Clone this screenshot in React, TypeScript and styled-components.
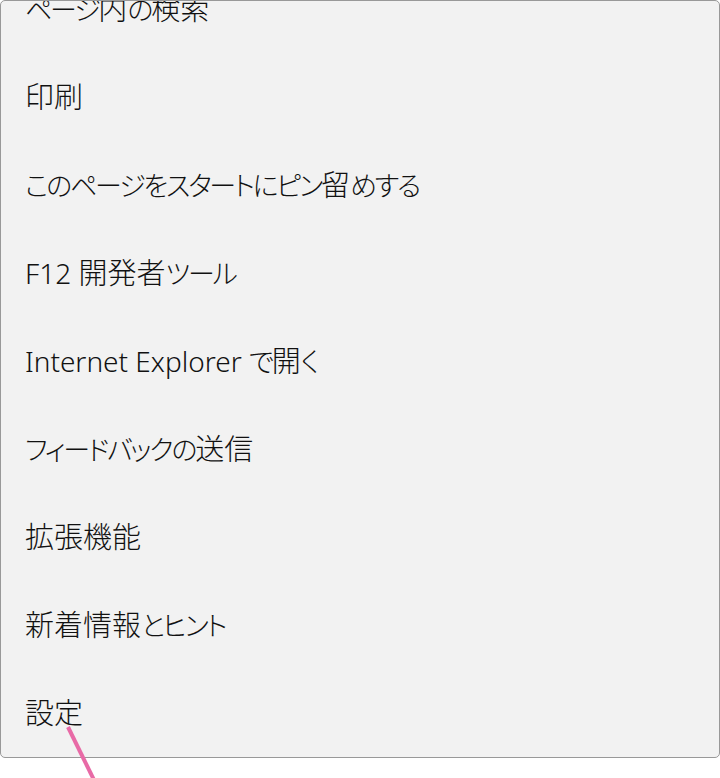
import styled, { createGlobalStyle } from "styled-components";

const GlobalStyle = createGlobalStyle`
  html, body {
    margin: 0;
    padding: 0;
    background: #ffffff;
  }
`;

const items = [
  "ページ内の検索",
  "印刷",
  "このページをスタートにピン留めする",
  "F12 開発者ツール",
  "Internet Explorer で開く",
  "フィードバックの送信",
  "拡張機能",
  "新着情報とヒント",
  "設定",
];

type RunKind = "latin" | "kana" | "kanji";

// split a label into script runs so each can get its own metrics
const splitRuns = (text: string) => {
  const runs: { kind: RunKind; text: string }[] = [];
  const re = /([\u3040-\u30ff]+)|([\u4e00-\u9fff]+)|([^\u3040-\u30ff\u4e00-\u9fff]+)/g;
  let m: RegExpExecArray | null;
  while ((m = re.exec(text))) {
    runs.push({ kind: m[1] ? "kana" : m[2] ? "kanji" : "latin", text: m[0] });
  }
  return runs;
};

const runSize: Record<RunKind, string> = {
  latin: "28px",
  kana: "27px",
  kanji: "29px",
};

const Page = styled.div`
  position: relative;
  width: 720px;
  height: 778px;
`;

const MenuPanel = styled.div`
  box-sizing: border-box;
  width: 720px;
  height: 758px;
  background: #f2f2f2;
  border: 1px solid #999999;
  border-radius: 5px;
  overflow: hidden;
`;

const MenuList = styled.ul`
  list-style: none;
  margin: -38px 0 0 0;
  padding: 0;
  display: flex;
  flex-direction: column;
`;

const MenuItem = styled.li`
  height: 88px;
  display: flex;
  align-items: center;
  padding-left: 24px;
  color: #111111;
`;

const Label = styled.span`
  white-space: pre;
  font-family: "Noto Sans", "Noto Sans CJK JP", sans-serif;
  font-size: 27px;
`;

const Run = styled.span<{ $kind: RunKind }>`
  font-family: ${(p) =>
    p.$kind === "latin"
      ? `"Noto Sans", "Noto Sans CJK JP", sans-serif`
      : `"Noto Sans CJK JP", sans-serif`};
  font-size: ${(p) => runSize[p.$kind]};
  font-feature-settings: ${(p) => (p.$kind === "kana" ? `"palt" 1` : "normal")};
  letter-spacing: ${(p) => (p.$kind === "kana" ? "-2.2px" : "0")};
  font-weight: 300;
`;

const Pointer = styled.svg`
  position: absolute;
  left: 60px;
  top: 722px;
  width: 44px;
  height: 60px;
`;

export default function App() {
  return (
    <Page>
      <GlobalStyle />
      <MenuPanel>
        <MenuList>
          {items.map((label) => (
            <MenuItem key={label}>
              <Label>
                {splitRuns(label).map((r, i) => (
                  <Run key={i} $kind={r.kind}>
                    {r.text}
                  </Run>
                ))}
              </Label>
            </MenuItem>
          ))}
        </MenuList>
      </MenuPanel>
      <Pointer viewBox="0 0 44 60">
        <line x1="8" y1="5" x2="34" y2="58" stroke="#e86aa6" strokeWidth="4" />
      </Pointer>
    </Page>
  );
}
